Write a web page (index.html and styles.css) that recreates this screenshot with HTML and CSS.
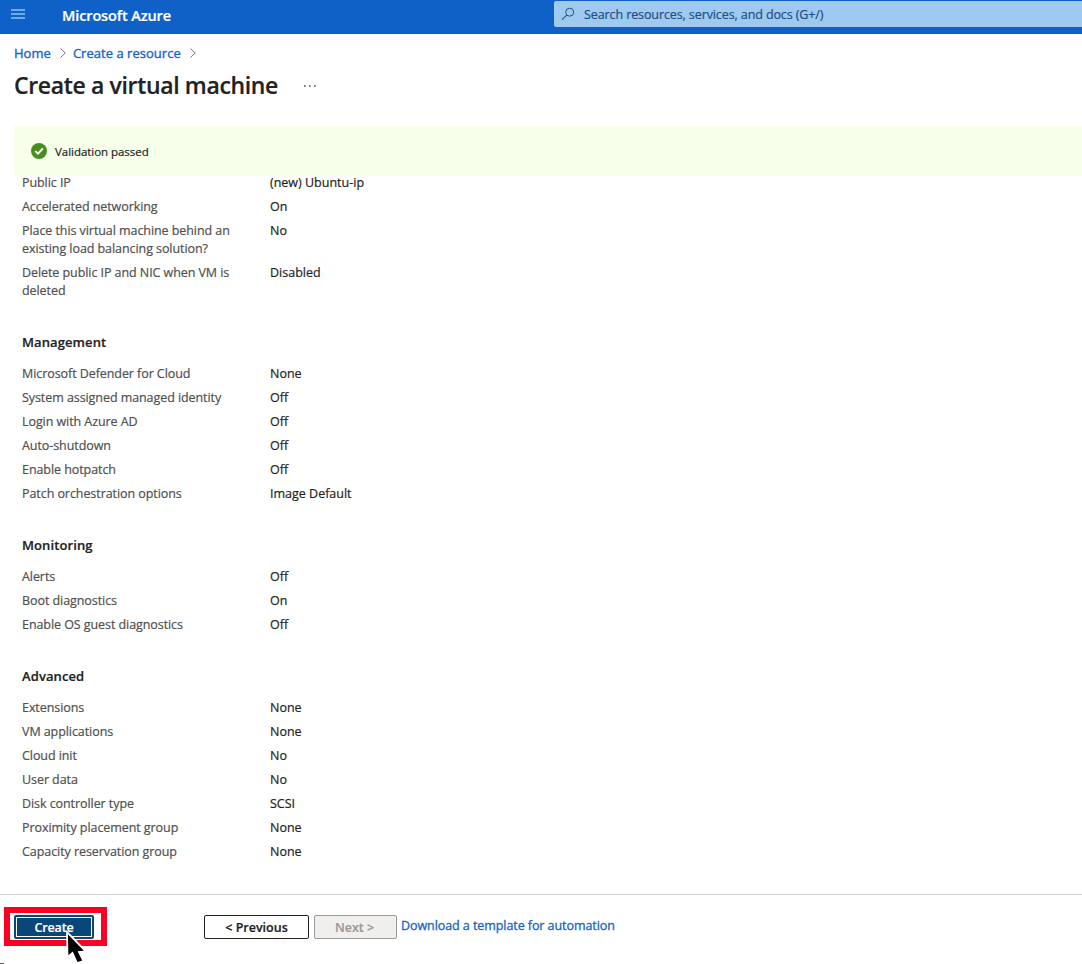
FILE: index.html
```html
<!DOCTYPE html>
<html lang="en">
<head>
<meta charset="utf-8">
<title>Create a virtual machine - Microsoft Azure</title>
<link rel="stylesheet" href="styles.css">
</head>
<body>
<div class="portal">
  <header class="topbar">
    <svg class="menu-icon" width="14" height="10" viewBox="0 0 14 10"><path d="M0 1h14M0 5h14M0 9h14" stroke="#6eabec" stroke-width="2"/></svg>
    <span class="brand">Microsoft Azure</span>
    <div class="search">
      <svg class="search-icon" width="14" height="14" viewBox="0 0 14 14"><circle cx="8.7" cy="5.2" r="4" fill="none" stroke="#235489" stroke-width="1"/><path d="M5.8 8.1L1 12.7" stroke="#235489" stroke-width="1.1"/></svg>
      <span class="search-text">Search resources, services, and docs (G+/)</span>
    </div>
  </header>
  <nav class="crumbs">
    <a class="crumb-home">Home</a>
    <svg class="chevron" width="6" height="10" viewBox="0 0 6 10"><path d="M.6.6L5.2 5L.6 9.4" fill="none" stroke="#777" stroke-width="1"/></svg>
    <a class="crumb-res">Create a resource</a>
    <svg class="chevron" width="6" height="10" viewBox="0 0 6 10"><path d="M.6.6L5.2 5L.6 9.4" fill="none" stroke="#777" stroke-width="1"/></svg>
  </nav>
  <div class="title-row">
    <h1 class="title">Create a virtual machine</h1>
    <svg class="more" width="12" height="2" viewBox="0 0 12 2"><path d="M0 1h1.7M5 1h1.7M10 1h1.7" stroke="#555" stroke-width="1.6"/></svg>
  </div>
  <div class="banner">
    <svg class="check" width="16" height="16" viewBox="0 0 16 16"><circle cx="8" cy="8" r="8" fill="#458f20"/><path d="M4.3 8.1L7 10.7L11.8 5.5" fill="none" stroke="#fff" stroke-width="1.9"/></svg>
    <span class="banner-text">Validation passed</span>
  </div>
  <main class="summary">
    <dl class="rows rows-first">
      <dt>Public IP</dt><dd>(new) Ubuntu-ip</dd>
      <dt>Accelerated networking</dt><dd>On</dd>
      <dt>Place this virtual machine behind an<br>existing load balancing solution?</dt><dd>No</dd>
      <dt>Delete public IP and NIC when VM is<br>deleted</dt><dd>Disabled</dd>
    </dl>
    <h2 class="section">Management</h2>
    <dl class="rows">
      <dt>Microsoft Defender for Cloud</dt><dd>None</dd>
      <dt>System assigned managed identity</dt><dd>Off</dd>
      <dt>Login with Azure AD</dt><dd>Off</dd>
      <dt>Auto-shutdown</dt><dd>Off</dd>
      <dt>Enable hotpatch</dt><dd>Off</dd>
      <dt>Patch orchestration options</dt><dd>Image Default</dd>
    </dl>
    <h2 class="section">Monitoring</h2>
    <dl class="rows">
      <dt>Alerts</dt><dd>Off</dd>
      <dt>Boot diagnostics</dt><dd>On</dd>
      <dt>Enable OS guest diagnostics</dt><dd>Off</dd>
    </dl>
    <h2 class="section">Advanced</h2>
    <dl class="rows">
      <dt>Extensions</dt><dd>None</dd>
      <dt>VM applications</dt><dd>None</dd>
      <dt>Cloud init</dt><dd>No</dd>
      <dt>User data</dt><dd>No</dd>
      <dt>Disk controller type</dt><dd>SCSI</dd>
      <dt>Proximity placement group</dt><dd>None</dd>
      <dt>Capacity reservation group</dt><dd>None</dd>
    </dl>
  </main>
  <footer class="actions">
    <div class="highlight">
      <button class="create"><span>Create</span></button>
      <svg class="cursor" width="26" height="34" viewBox="0 0 26 34"><path d="M2 1L2.5 26L7.5 22L12 32L18.5 30L14 21L21 20.5Z" fill="#000" stroke="#fff" stroke-width="1.8"/></svg>
    </div>
    <button class="btn previous">&lt; Previous</button>
    <button class="btn next" disabled>Next &gt;</button>
    <a class="template">Download a template for automation</a>
    <i class="corner"></i>
  </footer>
</div>
</body>
</html>
```
FILE: styles.css
```css
* { box-sizing: border-box; }
body {
  margin: 0;
  background: #fff;
  color: #1f1f1f;
  font-family: "Open Sans", "Noto Sans", sans-serif;
  font-size: 12.5px;
  line-height: 18px;
  -webkit-text-stroke: 0.2px currentColor;
}
.portal { position: relative; display: flex; flex-direction: column; height: 964px; overflow: hidden; }
.topbar { display: flex; flex: none; height: 34px; background: #1061c7; padding-left: 11px; }
.menu-icon { margin-top: 9px; flex: none; }
.brand { margin-left: 37px; width: 492px; line-height: 32px; font-size: 14.5px; font-weight: 600; color: #fff; letter-spacing: -0.12px; }
.search { display: flex; flex: 1; height: 26px; margin-top: 1px; padding-left: 7px; background: #9fc9ee; border-radius: 2px 0 0 2px; }
.search-icon { margin-top: 6px; }
.search-text { margin-left: 9px; line-height: 27px; color: #1d4f86; letter-spacing: -0.1px; white-space: nowrap; }
.crumbs { display: flex; flex: none; align-items: center; height: 38px; padding-left: 14px; font-size: 13px; letter-spacing: 0.03px; color: #1264c8; -webkit-text-stroke-width: 0.35px; }
.chevron { margin: 0 7px 0 9px; }
.title-row { display: flex; flex: none; height: 54px; padding-left: 14px; }
.title { margin: 0; width: 290px; font-size: 23px; line-height: 27px; font-weight: 600; letter-spacing: -0.35px; color: #222; white-space: nowrap; }
.more { margin-top: 13px; }
.banner { display: flex; flex: none; align-items: center; height: 50px; margin-left: 14px; padding-left: 17px; background: #f5ffea; font-size: 11.5px; letter-spacing: -0.04px; }
.banner-text { margin-left: 8px; padding-top: 2px; }
.summary { flex: none; height: 719px; padding: 0 22px; border-bottom: 1px solid #d0d0d0; }
.rows { display: grid; grid-template-columns: 248px 1fr; row-gap: 6px; margin: 0; padding: 3px 0; }
.rows-first { margin-top: -5px; }
.rows dt { color: #505050; letter-spacing: -0.07px; white-space: nowrap; }
.rows dd { margin: 0; color: #1f1f1f; }
.section { margin: 29px 0 10px; font-size: 13px; line-height: 20px; font-weight: 600; letter-spacing: 0.1px; color: #222; }
.actions { display: flex; flex: 1; align-items: flex-start; padding-left: 4px; }
.highlight { position: relative; width: 103px; height: 39px; margin: 12px 97px 0 0; padding: 2px 4px; border: 6px solid #fb0023; }
.create { display: block; width: 80px; height: 24px; padding: 2px; border: 0; border-radius: 2px; background: #0b4679; color: #fff; font: 600 12.5px/20px "Open Sans", sans-serif; letter-spacing: -0.15px; }
.create span { display: block; height: 20px; border: 1px solid #fff; }
.cursor { position: absolute; left: 55px; top: 18px; }
.btn { height: 24px; margin-top: 20px; padding: 1px 0 0; border: 1px solid #222; border-radius: 2px; background: #fff; color: #222; font: 600 12.5px/22px "Open Sans", sans-serif; }
.previous { width: 105px; }
.next { width: 83px; margin-left: 5px; padding-right: 2px; border-color: #9a9a98; background: #f0efed; color: #9a9997; -webkit-text-stroke: 0.2px currentColor; }
.template { margin: 22px 0 0 4px; font-size: 12.5px; letter-spacing: -0.07px; color: #1264c8; -webkit-text-stroke-width: 0.3px; white-space: nowrap; }
.corner { position: absolute; left: 0; bottom: 0; width: 4px; height: 1px; background: #555; }
```
